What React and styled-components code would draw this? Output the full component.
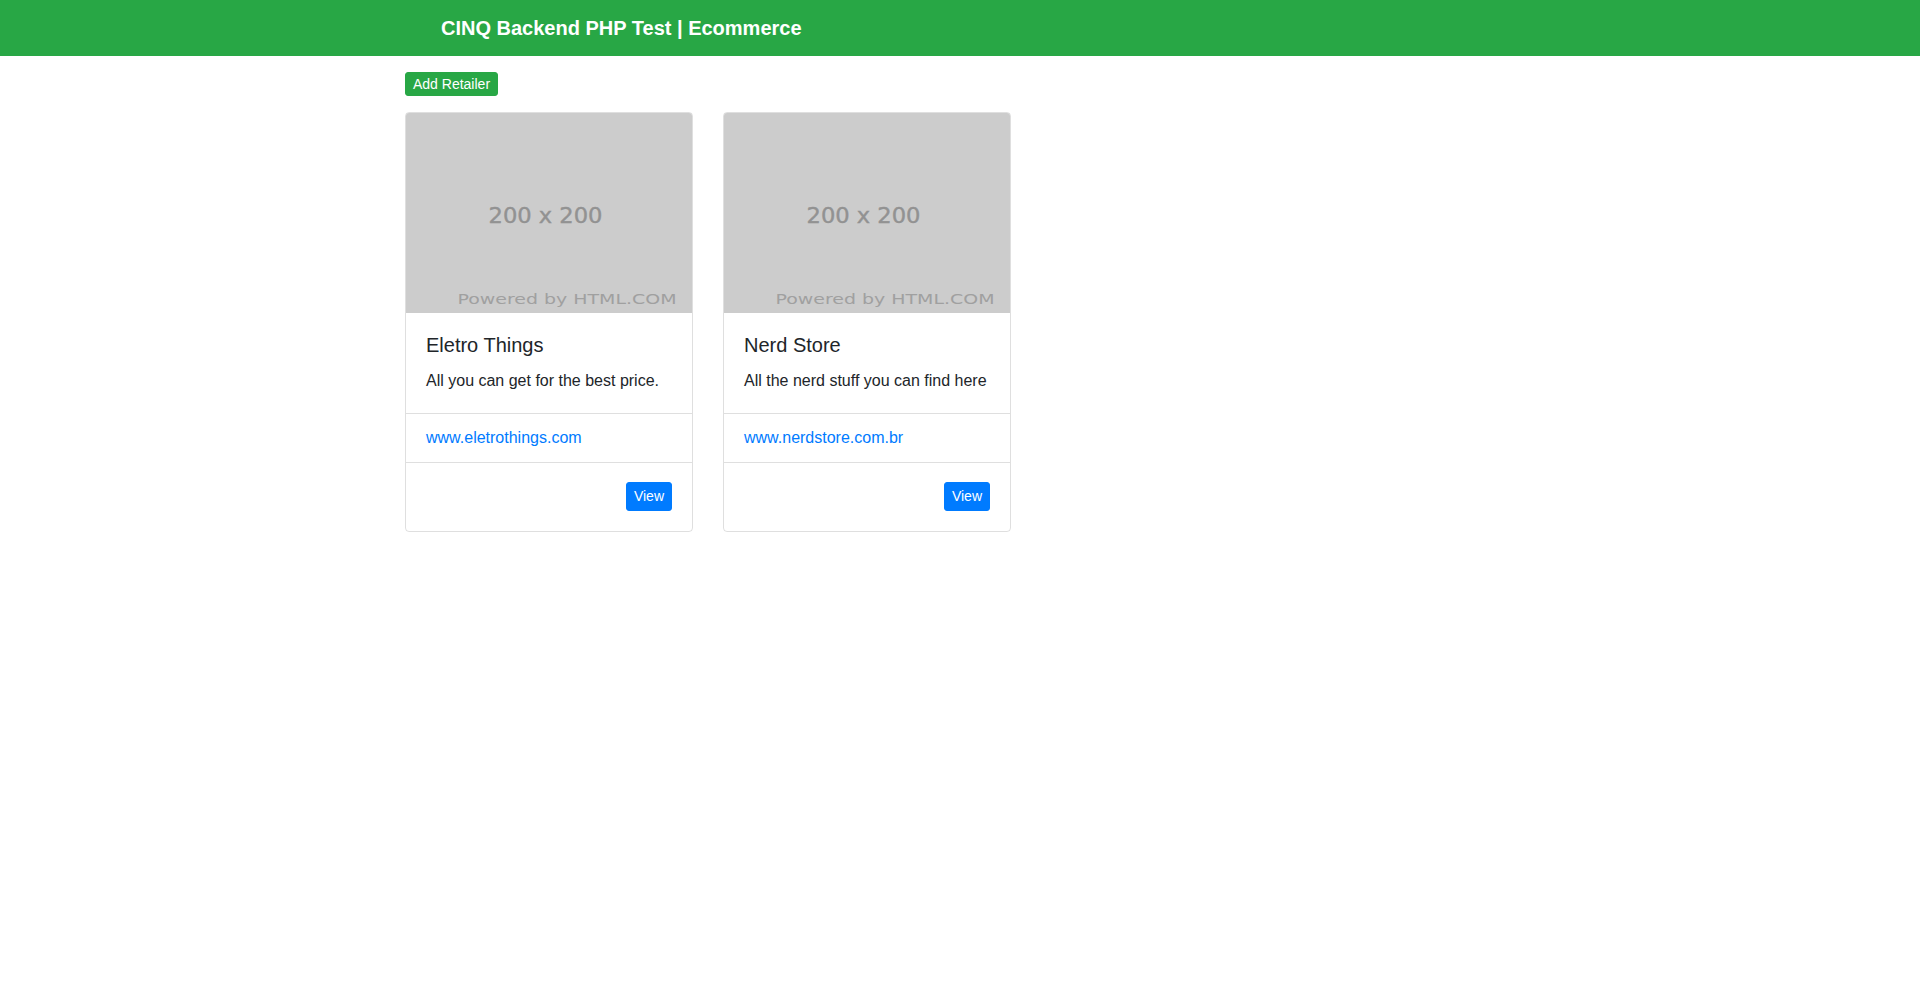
import React from 'react'
import styled, { createGlobalStyle } from 'styled-components'

const retailers = [
  {
    name: 'Eletro Things',
    description: 'All you can get for the best price.',
    site: 'www.eletrothings.com',
  },
  {
    name: 'Nerd Store',
    description: 'All the nerd stuff you can find here',
    site: 'www.nerdstore.com.br',
  },
]

const GlobalStyle = createGlobalStyle`
  body {
    margin: 0;
    background: #fff;
    font-family: "Liberation Sans", Arial, sans-serif;
    font-size: 16px;
    line-height: 1.5;
    color: #212529;
  }
`

const Placeholder = () => (
  <ImageBox viewBox='0 0 286 200' preserveAspectRatio='none'>
    <rect width='286' height='200' fill='#cccccc' />
    <text
      x='82.5'
      y='109.5'
      textLength='114'
      lengthAdjust='spacingAndGlyphs'
      fontFamily='DejaVu Sans, sans-serif'
      fontSize='21'
      fill='#929292'
      stroke='#929292'
      strokeWidth='0.4'
    >
      200 x 200
    </text>
    <text
      x='51.5'
      y='191'
      textLength='219'
      lengthAdjust='spacingAndGlyphs'
      fontFamily='DejaVu Sans, sans-serif'
      fontSize='14'
      fill='#a0a0a0'
    >
      Powered by HTML.COM
    </text>
  </ImageBox>
)

const App = () => {
  return (
    <>
      <GlobalStyle />
      <Navbar>
        <Brand>CINQ Backend PHP Test | Ecommerce</Brand>
      </Navbar>
      <Container>
        <AddButton>Add Retailer</AddButton>
        <CardRow>
          {retailers.map((r) => (
            <Card key={r.name}>
              <Placeholder />
              <CardBody>
                <CardTitle>{r.name}</CardTitle>
                <CardText>{r.description}</CardText>
              </CardBody>
              <ListItem>
                <SiteLink href='#'>{r.site}</SiteLink>
              </ListItem>
              <CardFooter>
                <ViewButton>View</ViewButton>
              </CardFooter>
            </Card>
          ))}
        </CardRow>
      </Container>
    </>
  )
}

const Navbar = styled.nav`
  display: flex;
  align-items: center;
  height: 56px;
  background-color: #28a745;
`
const Brand = styled.a`
  padding-left: 441px;
  font-size: 20px;
  font-weight: 700;
  line-height: 30px;
  color: #fff;
`
const Container = styled.main`
  display: flex;
  flex-direction: column;
  align-items: flex-start;
  gap: 16px;
  padding: 16px 0 0 405px;
`
const AddButton = styled.button`
  font-family: inherit;
  font-size: 14px;
  line-height: 16px;
  padding: 3px 7px;
  color: #fff;
  background-color: #28a745;
  border: 1px solid #28a745;
  border-radius: 3px;
`
const CardRow = styled.div`
  display: flex;
  gap: 30px;
`
const Card = styled.div`
  display: flex;
  flex-direction: column;
  width: 288px;
  border: 1px solid rgba(0, 0, 0, 0.125);
  border-radius: 4px;
  overflow: hidden;
  box-sizing: border-box;
`
const ImageBox = styled.svg`
  display: block;
  width: 100%;
  height: 200px;
`
const CardBody = styled.div`
  padding: 20px;
`
const CardTitle = styled.h5`
  margin: 0 0 12px;
  font-size: 20px;
  font-weight: 500;
  line-height: 24px;
`
const CardText = styled.p`
  margin: 0;
`
const ListItem = styled.div`
  padding: 12px 20px;
  border-top: 1px solid rgba(0, 0, 0, 0.125);
`
const SiteLink = styled.a`
  color: #007bff;
  text-decoration: none;
`
const CardFooter = styled.div`
  display: flex;
  justify-content: flex-end;
  padding: 19px 20px 20px;
  border-top: 1px solid rgba(0, 0, 0, 0.125);
`
const ViewButton = styled.button`
  font-family: inherit;
  font-size: 14px;
  line-height: 21px;
  padding: 3px 7px;
  color: #fff;
  background-color: #007bff;
  border: 1px solid #007bff;
  border-radius: 3px;
`

export default App
